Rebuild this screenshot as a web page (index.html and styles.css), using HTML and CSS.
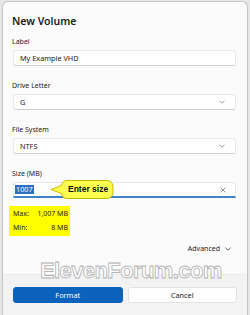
FILE: index.html
```html
<!DOCTYPE html>
<html lang="en">
<head>
    <meta charset="UTF-8">
    <meta name="viewport" content="width=device-width, initial-scale=1.0">
    <title>New Volume</title>
    <link rel="stylesheet" href="styles.css">
</head>
<body>
    <div class="dialog">
        <div class="content">
            <h1 class="title">New Volume</h1>

            <div class="field">
                <div class="field-label">Label</div>
                <div class="box">My Example VHD</div>
            </div>

            <div class="field">
                <div class="field-label">Drive Letter</div>
                <div class="box select">
                    <span>G</span>
                    <svg class="chev" width="6" height="4" viewBox="0 0 6 4"><path d="M0.5 0.8 L3 3.2 L5.5 0.8" fill="none" stroke="#8a8a8a" stroke-width="0.9"/></svg>
                </div>
            </div>

            <div class="field">
                <div class="field-label">File System</div>
                <div class="box select">
                    <span>NTFS</span>
                    <svg class="chev" width="6" height="4" viewBox="0 0 6 4"><path d="M0.5 0.8 L3 3.2 L5.5 0.8" fill="none" stroke="#8a8a8a" stroke-width="0.9"/></svg>
                </div>
            </div>

            <div class="field">
                <div class="field-label">Size (MB)</div>
                <div class="box size-box">
                    <span class="selected">1007</span>
                    <svg class="clear" width="6" height="6" viewBox="0 0 6 6"><path d="M0.5 0.5 L5.5 5.5 M5.5 0.5 L0.5 5.5" stroke="#8a8a8a" stroke-width="0.9"/></svg>
                    <div class="callout">
                        <svg width="64" height="19" viewBox="0 0 64 19"><path d="M17 0.5 H57 A6 6 0 0 1 63 6.5 V12.5 A6 6 0 0 1 57 18.5 H17 A6 6 0 0 1 11.5 13.5 L1 9.5 L11.5 5.5 A6 6 0 0 1 17 0.5 Z" fill="#ffff4d" stroke="#c9b800" stroke-width="1"/></svg>
                        <span>Enter size</span>
                    </div>
                </div>
            </div>

            <div class="limits">
                <div class="limit-row"><span>Max:</span><span>1,007 MB</span></div>
                <div class="limit-row"><span>Min:</span><span>8 MB</span></div>
            </div>

            <div class="advanced">
                <span>Advanced</span>
                <svg width="6" height="4" viewBox="0 0 6 4"><path d="M0.5 0.8 L3 3.2 L5.5 0.8" fill="none" stroke="#333" stroke-width="0.8"/></svg>
            </div>
        </div>

        <div class="footer">
            <button class="btn primary">Format</button>
            <button class="btn">Cancel</button>
        </div>

        <div class="watermark">ElevenForum.com</div>
    </div>
</body>
</html>
```

FILE: styles.css
```css
* {
    margin: 0;
    padding: 0;
    box-sizing: border-box;
}

body {
    font-family: 'Noto Sans', 'Open Sans', sans-serif;
    background: #e6e6e6;
    padding: 1px 2px 0 2px;
    height: 315px;
    overflow: hidden;
    color: #1b1b1b;
}

.dialog {
    position: relative;
    background: #fbfbfb;
    border: 1px solid #c4c4c4;
    border-bottom: none;
    border-radius: 6px 6px 0 0;
    height: 314px;
    display: flex;
    flex-direction: column;
}

.content {
    padding: 10px 11px 0 10px;
    flex: 1;
}

.title {
    font-size: 10.5px;
    font-weight: 600;
    line-height: 18px;
    margin-left: -1px;
    margin-bottom: 6px;
}

.field {
    margin-bottom: 14px;
}

.field-label {
    font-size: 7px;
    line-height: 12px;
    margin-left: -1px;
    margin-bottom: 2px;
}

.box {
    height: 16px;
    background: #fff;
    border: 1px solid #e8e8e8;
    border-bottom-color: #d0d0d0;
    border-radius: 3px;
    font-size: 7.3px;
    line-height: 14px;
    padding: 0 6px;
    display: flex;
    align-items: center;
    justify-content: space-between;
}

.chev {
    margin-right: 4px;
}

.size-box {
    position: relative;
    padding-left: 1px;
    border-bottom: 2px solid #3f83c9;
    border-radius: 3px 3px 0 0;
    height: 16px;
}

.selected {
    background: #2f6fc0;
    color: #fff;
    padding: 0 1px;
    line-height: 9px;
}

.clear {
    margin-right: 3px;
}

.callout {
    position: absolute;
    left: 36px;
    top: -3px;
    width: 64px;
    height: 19px;
}

.callout svg {
    position: absolute;
    left: 0;
    top: 0;
}

.callout span {
    position: absolute;
    left: 18px;
    top: 3px;
    font-family: 'Liberation Sans', Arial, sans-serif;
    font-weight: bold;
    font-size: 8.5px;
    line-height: 12px;
    color: #111;
}

.limits {
    background: #ffff00;
    width: 61px;
    margin: -6px 0 0 -4px;
    padding: 1px 2px 1px 4px;
    font-size: 7px;
    line-height: 14px;
}

.limit-row {
    display: flex;
    justify-content: space-between;
}

.advanced {
    display: flex;
    justify-content: flex-end;
    align-items: center;
    gap: 5px;
    font-size: 7px;
    margin-top: 8px;
    padding-right: 5px;
}

.footer {
    background: #f3f3f3;
    border-top: 1px solid #ececec;
    padding: 12px 10px 12px 10px;
    display: flex;
    gap: 5px;
}

.btn {
    flex: 1;
    height: 16px;
    font-family: 'Noto Sans', 'Open Sans', sans-serif;
    font-size: 7.3px;
    background: #fefefe;
    color: #1b1b1b;
    border: 1px solid #e3e3e3;
    border-radius: 3px;
}

.btn.primary {
    background: #0a62bd;
    border-color: #0a62bd;
    color: #fff;
}

.watermark {
    position: absolute;
    left: 37px;
    top: 256px;
    font-family: 'Liberation Sans', Arial, sans-serif;
    font-weight: bold;
    font-size: 22px;
    letter-spacing: -0.6px;
    color: rgba(255, 255, 255, 0.85);
    -webkit-text-stroke: 0.8px #b0b0b0;
    pointer-events: none;
}
```
